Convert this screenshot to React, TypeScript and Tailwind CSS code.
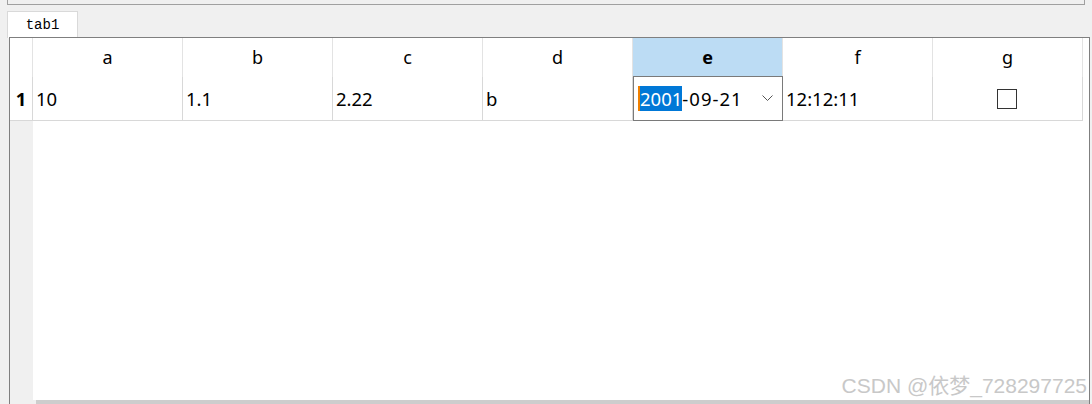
import React from 'react';

const cols = ['a', 'b', 'c', 'd', 'e', 'f', 'g'];

const App: React.FC = () => {
  return (
    <div className="relative w-[1092px] h-[404px] overflow-hidden bg-[#f0f0f0] font-['Noto_Sans','Liberation_Sans',sans-serif] text-black">
      {/* bottom edge of the widget above */}
      <div className="ml-[7px] w-[1078px] h-[5px] border-x border-b border-[#a0a0a0]" />

      {/* tab bar */}
      <div className="mt-[6px] ml-[7px] w-[71px] h-[27px] bg-white border-x border-t border-[#d9d9d9] flex items-center justify-center font-['Liberation_Mono',monospace] text-[14px] pt-[1px]">
        tab1
      </div>

      {/* pane */}
      <div className="-mt-px ml-[9px] w-[1081px] h-[368px] bg-white border-x border-t border-[#7f7f7f] flex flex-col">
        {/* header row */}
        <div className="flex h-[39px]">
          <div className="w-[23px] border-r border-[#e3e3e3]" />
          {cols.map((c) => (
            <div
              key={c}
              className={
                c === 'e'
                  ? 'w-[150px] border-r border-[#e3e3e3] bg-[#bcdcf4] flex items-center justify-center text-[18px] font-bold'
                  : 'w-[150px] border-r border-[#e3e3e3] flex items-center justify-center text-[18px]'
              }
            >
              {c}
            </div>
          ))}
        </div>

        {/* data row */}
        <div className="flex h-[44px] text-[18.5px]">
          <div className="w-[23px] border-r border-b border-[#d8d8d8] flex items-center justify-center font-bold">
            1
          </div>
          <div className="w-[150px] border-r border-b border-[#d8d8d8] flex items-center pl-[3px]">10</div>
          <div className="w-[150px] border-r border-b border-[#d8d8d8] flex items-center pl-[3px]">1.1</div>
          <div className="w-[150px] border-r border-b border-[#d8d8d8] flex items-center pl-[3px]">2.22</div>
          <div className="w-[150px] border-r border-b border-[#d8d8d8] flex items-center pl-[3px]">b</div>
          <div className="w-[150px] h-[45px] border border-[#7a7a7a] flex items-center pl-[4px] pr-[9px] bg-white z-10 -mt-px">
            <span className="bg-[#0078d7] text-white leading-[25px] border-l-2 border-[#f08000]">2001</span>
            <span className="tracking-[1px]">-09-21</span>
            <svg className="ml-auto" width="11" height="7" viewBox="0 0 11 7">
              <path d="M0.5 0.5 L5.5 5.5 L10.5 0.5" fill="none" stroke="#555" strokeWidth="1" />
            </svg>
          </div>
          <div className="w-[150px] border-r border-b border-[#d8d8d8] flex items-center pl-[3px]">12:12:11</div>
          <div className="w-[150px] border-r border-b border-[#d8d8d8] flex items-center justify-center">
            <div className="w-[20px] h-[20px] border border-[#333333] bg-white mr-[1px]" />
          </div>
        </div>

        {/* empty area */}
        <div className="flex flex-1">
          <div className="w-[23px] bg-[#f0f0f0]" />
          <div className="flex-1" />
        </div>

        {/* horizontal scrollbar */}
        <div className="flex h-[5px] bg-[#f0f0f0]">
          <div className="w-[26px]" />
          <div className="flex-1 bg-[#cdcdcd]" />
        </div>
      </div>

      {/* watermark */}
      <div className="absolute right-[5px] bottom-[8px] text-[21px] text-[#c8c8c8] font-['Liberation_Sans','Noto_Sans_CJK_SC',sans-serif] leading-none">
        CSDN @依梦_728297725
      </div>
    </div>
  );
};

export default App;
